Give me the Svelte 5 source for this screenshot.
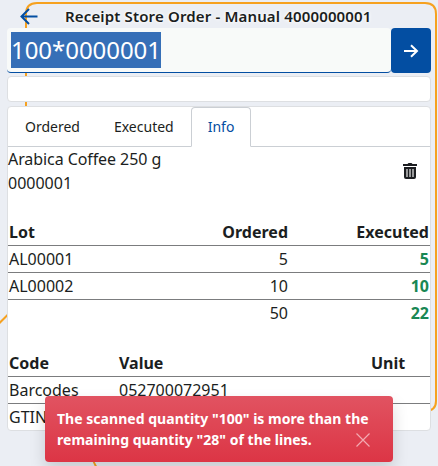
<script>
  const lots = [
    { lot: 'AL00001', ordered: 5, executed: 5 },
    { lot: 'AL00002', ordered: 10, executed: 10 },
    { lot: '', ordered: 50, executed: 22 }
  ];
  const codes = [
    { code: 'Barcodes', value: '052700072951' },
    { code: 'GTIN', value: '' }
  ];
  const tabs = ['Ordered', 'Executed', 'Info'];
  let active = $state('Info');
</script>

<div class="page">
  <svg class="backdrop" width="438" height="466" viewBox="0 0 438 466" fill="none">
    <path d="M26 108V14Q26 3 37 3H425Q436 3 436 14V401Q436 411 425 411H300" stroke="#f6a11f" stroke-width="2" />
    <path d="M-2 324.5L10 312.5M93 460Q94.500 464 97 468" stroke="#f6a11f" stroke-width="2" />
  </svg>

  <header>
    <svg class="back" width="18" height="17" viewBox="0 0 18 17" fill="none" stroke="#034ea2" stroke-width="2">
      <path d="M17.500 8.500H2M9 1L1.500 8.500L9 16" />
    </svg>
    <h1>Receipt Store Order - Manual 4000000001</h1>
  </header>

  <div class="scan">
    <div class="field"><span>100*0000001</span></div>
    <button class="go" aria-label="Submit">
      <svg width="16" height="14" viewBox="0 0 16 14" fill="none" stroke="#fff" stroke-width="2">
        <path d="M1 7H14M8 1.200L14 7L8 12.800" />
      </svg>
    </button>
  </div>

  <div class="blank"></div>

  <main>
    <nav>
      {#each tabs as tab}
        <button class:active={active === tab} onclick={() => (active = tab)}>{tab}</button>
      {/each}
    </nav>
    <section class="product">
      <div><span class="name">Arabica Coffee 250 g</span><br />0000001</div>
      <svg width="14" height="16" viewBox="0 0 14 16">
        <path d="M0 1h4.500l1-1h3l1 1H14v2H0z" fill="#1b1d20" />
        <path d="M1 4h12v10q0 2-2 2H3q-2 0-2-2z" fill="#1b1d20" />
        <path d="M3 6h2v8H3zM6 6h2v8H6zM9 6h2v8H9z" fill="#98999a" />
      </svg>
    </section>
    <div class="lots">
      <div class="row head"><span>Lot</span><span>Ordered</span><span>Executed</span></div>
      {#each lots as row}
        <div class="row"><span>{row.lot}</span><span>{row.ordered}</span><b>{row.executed}</b></div>
      {/each}
    </div>
    <div class="codes">
      <div class="row head"><span>Code</span><span>Value</span><span>Unit</span></div>
      {#each codes as row}
        <div class="row"><span>{row.code}</span><span>{row.value}</span><span></span></div>
      {/each}
    </div>
  </main>

  <div class="toast" role="alert">
    <p>The scanned quantity "100" is more than the remaining quantity "28" of the lines.</p>
    <svg class="close" width="14" height="14" viewBox="0 0 14 14" fill="none" stroke="#f3aab1" stroke-width="1.200">
      <path d="M.5.5l13 13M13.500.5l-13 13" />
    </svg>
  </div>
</div>

<style>
  .page {
    position: relative;
    box-sizing: border-box;
    width: 438px;
    height: 466px;
    padding: 0 7px;
    overflow: hidden;
    background: #ebeef4;
    color: #1b1e21;
    font: 16px/24px 'Noto Sans', sans-serif;
  }
  .backdrop { position: absolute; inset: 0; }
  header, .scan, .blank, main { position: relative; }
  header { display: flex; height: 28px; }
  .back { margin: 8px 0 0 13px; }
  h1 {
    margin: 5px 0 0 27px;
    font-size: 15px;
    line-height: 23px;
    font-weight: 600;
    letter-spacing: 0.15px;
    white-space: nowrap;
    text-shadow: 0 0 3px #fff, 0 0 4px #fff;
  }
  .scan { display: flex; height: 45px; }
  .field {
    box-sizing: border-box;
    width: 384px;
    padding: 4px 4px 0;
    border-bottom: 1px solid #034ea2;
    border-radius: 4px;
    background: #f8faf9;
  }
  .field span {
    display: inline-block;
    height: 36px;
    background: #366fb7;
    color: #fff;
    font-size: 24px;
    line-height: 36px;
    letter-spacing: -0.05px;
  }
  .go {
    display: flex;
    align-items: center;
    justify-content: center;
    width: 40px;
    padding: 0;
    border: 0;
    border-radius: 4px;
    background: #034ea2;
  }
  .blank, main {
    box-sizing: border-box;
    border: 1px solid #dddfe2;
    border-radius: 4px;
    background: #fff;
  }
  .blank { height: 26px; margin: 3px 0 4px; }
  main { height: 325px; }
  nav { display: flex; height: 40px; box-sizing: border-box; border-bottom: 1px solid #cbcfd4; }
  nav button {
    box-sizing: border-box;
    height: 40px;
    padding: 0 16px;
    border: 1px solid transparent;
    border-radius: 4px 4px 0 0;
    background: none;
    color: inherit;
    font: 14px/38px 'Noto Sans', sans-serif;
  }
  nav .active { border-color: #cbcfd4; border-bottom-color: #fff; background: #fff; color: #034ea2; }
  .product { display: flex; justify-content: space-between; height: 72px; }
  .name { letter-spacing: -0.08px; }
  .product svg { margin: 16px 13px 0 0; }
  .row {
    display: grid;
    box-sizing: border-box;
    height: 27px;
    padding: 1px 1px 0;
    border-bottom: 1px solid #7b7c7e;
  }
  .row:last-child { border-bottom: 0; }
  .head { font-weight: 700; }
  .lots .row { grid-template-columns: 140px 139px 1fr; }
  .lots .row > :not(:first-child) { text-align: right; }
  .lots b { color: #198754; }
  .codes { margin-top: 23px; }
  .codes .row { grid-template-columns: 110px 252px 1fr; }
  .toast {
    position: absolute;
    left: 45px;
    top: 396px;
    box-sizing: border-box;
    width: 348px;
    height: 66px;
    padding: 12px;
    border-radius: 4px;
    background: linear-gradient(#e15361, #dc3545);
    box-shadow: 0 8px 16px rgb(0 0 0 / 15%);
    color: #fff;
  }
  .toast p { margin: 0; font-size: 14px; line-height: 21px; font-weight: 700; letter-spacing: 0.03px; }
  .close { position: absolute; right: 23px; bottom: 15px; }
</style>
